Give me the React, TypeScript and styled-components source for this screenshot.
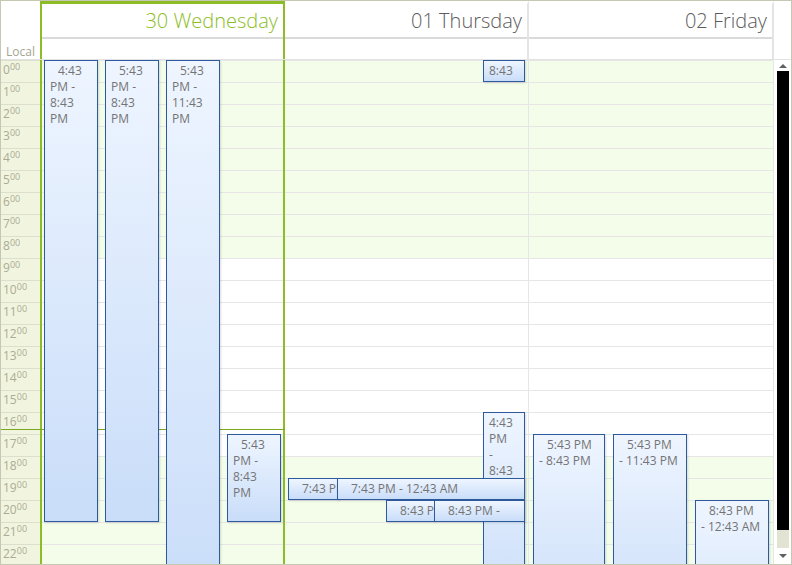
import React from "react"
import styled, { createGlobalStyle } from "styled-components"

const GREEN = "#8cbd26"
const ROW = 22

const Global = createGlobalStyle`
  html, body {
    margin: 0;
    padding: 0;
    background: #fff;
  }
  body {
    font-family: "Open Sans", "Noto Sans", "Liberation Sans", sans-serif;
  }
`

const Frame = styled.div`
  width: 792px;
  height: 565px;
  box-sizing: border-box;
  border: 1px solid #c6c8b4;
  display: flex;
  flex-direction: column;
  overflow: hidden;
  background: #fff;
`

const Header = styled.div`
  display: grid;
  grid-template-columns: 39px 245px 244px 245px 17px;
  height: 59px;
  box-sizing: border-box;
  border-bottom: 1px solid #e2e2e2;
`

const LocalCell = styled.div`
  display: flex;
  align-items: flex-end;
  justify-content: flex-end;
  padding: 0 5px 0 0;
  font-size: 12px;
  line-height: 15px;
  color: #a4a590;
`

const DayHead = styled.div<{ $today?: boolean }>`
  display: flex;
  flex-direction: column;
  border-top: 3px solid ${(p) => (p.$today ? GREEN : "#fff")};
  border-left: ${(p) => (p.$today ? `2px solid ${GREEN}` : "none")};
  border-right: 2px solid ${(p) => (p.$today ? GREEN : "#e4e4e4")};
`

const DateRow = styled.div<{ $today?: boolean }>`
  height: 33px;
  display: flex;
  align-items: center;
  justify-content: flex-end;
  padding-right: 5px;
  border-bottom: 2px solid #dadada;
  font-size: 20px;
  font-weight: 300;
  color: ${(p) => (p.$today ? GREEN : "#5c5c5c")};
`

const AllDayRow = styled.div`
  flex: 1;
`

const Body = styled.div`
  flex: 1;
  display: flex;
  position: relative;
  overflow: hidden;
`

const TimeCol = styled.div`
  width: 39px;
  flex: none;
  background: #f1f4df;
`

const TimeCell = styled.div`
  height: ${ROW}px;
  box-sizing: border-box;
  border-top: 1px solid #dcdfcb;
  display: flex;
  align-items: flex-start;
  padding: 2px 0 0 2px;
  color: #abac93;
`

const HourNum = styled.span`
  font-size: 12px;
  line-height: 14px;
`

const HourSup = styled.span`
  font-size: 9px;
  line-height: 10px;
  margin-top: -1px;
`

const DayCol = styled.div<{ $today?: boolean; $width: number }>`
  width: ${(p) => p.$width}px;
  flex: none;
  box-sizing: border-box;
  position: relative;
  border-left: ${(p) => (p.$today ? `2px solid ${GREEN}` : "none")};
  border-right: ${(p) => (p.$today ? `2px solid ${GREEN}` : "1px solid #e6e6e6")};
`

const Slot = styled.div<{ $work: boolean }>`
  height: ${ROW}px;
  box-sizing: border-box;
  border-top: 1px solid #e6e6e6;
  background: ${(p) => (p.$work ? "#fff" : "#f3fdea")};
`

const Appt = styled.div<{ $indent: boolean; $nowrap?: boolean }>`
  position: absolute;
  z-index: 2;
  box-sizing: border-box;
  border: 1px solid #2c5a9c;
  background: linear-gradient(to bottom, #eef5ff 0%, #c9ddf9 100%);
  box-shadow: 1px 1px 2px rgba(0, 0, 0, 0.14);
  padding: 2px 4px 0 5px;
  font-size: 12px;
  line-height: 16px;
  color: #747474;
  text-indent: ${(p) => (p.$indent ? "8px" : "0")};
  white-space: ${(p) => (p.$nowrap ? "nowrap" : "pre-line")};
  overflow: hidden;
`

const NowLine = styled.div`
  position: absolute;
  z-index: 1;
  left: 0;
  top: 369px;
  width: 284px;
  height: 1px;
  background: #7aa823;
`

const Scroll = styled.div`
  width: 17px;
  flex: none;
  display: flex;
  flex-direction: column;
  background: #fff;
`

const ArrowBox = styled.div<{ $h: number }>`
  height: ${(p) => p.$h}px;
  display: flex;
  align-items: center;
  justify-content: center;
`

const Tri = styled.div<{ $down?: boolean }>`
  width: 0;
  height: 0;
  border-left: 4px solid transparent;
  border-right: 4px solid transparent;
  ${(p) => (p.$down ? "border-top: 4px solid #606060;" : "border-bottom: 4px solid #606060;")}
`

const Track = styled.div`
  flex: 1;
  margin: 0 2px 0 3px;
  background: #e2e3d3;
`

const Thumb = styled.div`
  height: 459px;
  background: #000;
`

type Ev = { left: number; top: number; w: number; h: number; text: string; indent?: boolean; nowrap?: boolean }

const days: { label: string; today?: boolean; width: number; events: Ev[] }[] = [
  {
    label: "30 Wednesday",
    today: true,
    width: 245,
    events: [
      { left: 2, top: 0, w: 54, h: 462, text: "4:43 PM - 8:43 PM", indent: true },
      { left: 63, top: 0, w: 54, h: 462, text: "5:43 PM - 8:43 PM", indent: true },
      { left: 124, top: 0, w: 54, h: 540, text: "5:43 PM - 11:43 PM", indent: true },
      { left: 185, top: 374, w: 54, h: 88, text: "5:43 PM - 8:43 PM", indent: true },
    ],
  },
  {
    label: "01 Thursday",
    width: 244,
    events: [
      { left: 198, top: 0, w: 42, h: 22, text: "8:43" },
      { left: 198, top: 352, w: 42, h: 200, text: "4:43\nPM\n-\n8:43\nPM" },
      { left: 3, top: 418, w: 51, h: 22, text: "7:43 PM - 12:43 AM", indent: true, nowrap: true },
      { left: 52, top: 418, w: 188, h: 22, text: "7:43 PM - 12:43 AM", indent: true },
      { left: 101, top: 440, w: 49, h: 22, text: "8:43 PM - 12:43 AM", indent: true, nowrap: true },
      { left: 149, top: 440, w: 91, h: 22, text: "8:43 PM -\n12:43 AM", indent: true },
    ],
  },
  {
    label: "02 Friday",
    width: 245,
    events: [
      { left: 4, top: 374, w: 72, h: 200, text: "5:43 PM\n- 8:43 PM", indent: true },
      { left: 84, top: 374, w: 74, h: 200, text: "5:43 PM\n- 11:43 PM", indent: true },
      { left: 166, top: 440, w: 74, h: 200, text: "8:43 PM\n- 12:43 AM", indent: true },
    ],
  },
]

const hours = Array.from({ length: 24 }, (_, i) => i)

export default function App() {
  return (
    <>
      <Global />
      <Frame>
        <Header>
          <LocalCell>Local</LocalCell>
          {days.map((d) => (
            <DayHead key={d.label} $today={d.today}>
              <DateRow $today={d.today}>{d.label}</DateRow>
              <AllDayRow />
            </DayHead>
          ))}
          <div />
        </Header>
        <Body>
          <TimeCol>
            {hours.map((h) => (
              <TimeCell key={h}>
                <HourNum>{h}</HourNum>
                <HourSup>00</HourSup>
              </TimeCell>
            ))}
          </TimeCol>
          {days.map((d) => (
            <DayCol key={d.label} $today={d.today} $width={d.width}>
              {hours.map((h) => (
                <Slot key={h} $work={h >= 9 && h < 18} />
              ))}
              {d.events.map((e, i) => (
                <Appt
                  key={i}
                  $indent={!!e.indent}
                  $nowrap={e.nowrap}
                  style={{ left: e.left, top: e.top, width: e.w, height: e.h }}
                >
                  {e.text}
                </Appt>
              ))}
            </DayCol>
          ))}
          <Scroll>
            <ArrowBox $h={11}>
              <Tri />
            </ArrowBox>
            <Track>
              <Thumb />
            </Track>
            <ArrowBox $h={16}>
              <Tri $down />
            </ArrowBox>
          </Scroll>
          <NowLine />
        </Body>
      </Frame>
    </>
  )
}
